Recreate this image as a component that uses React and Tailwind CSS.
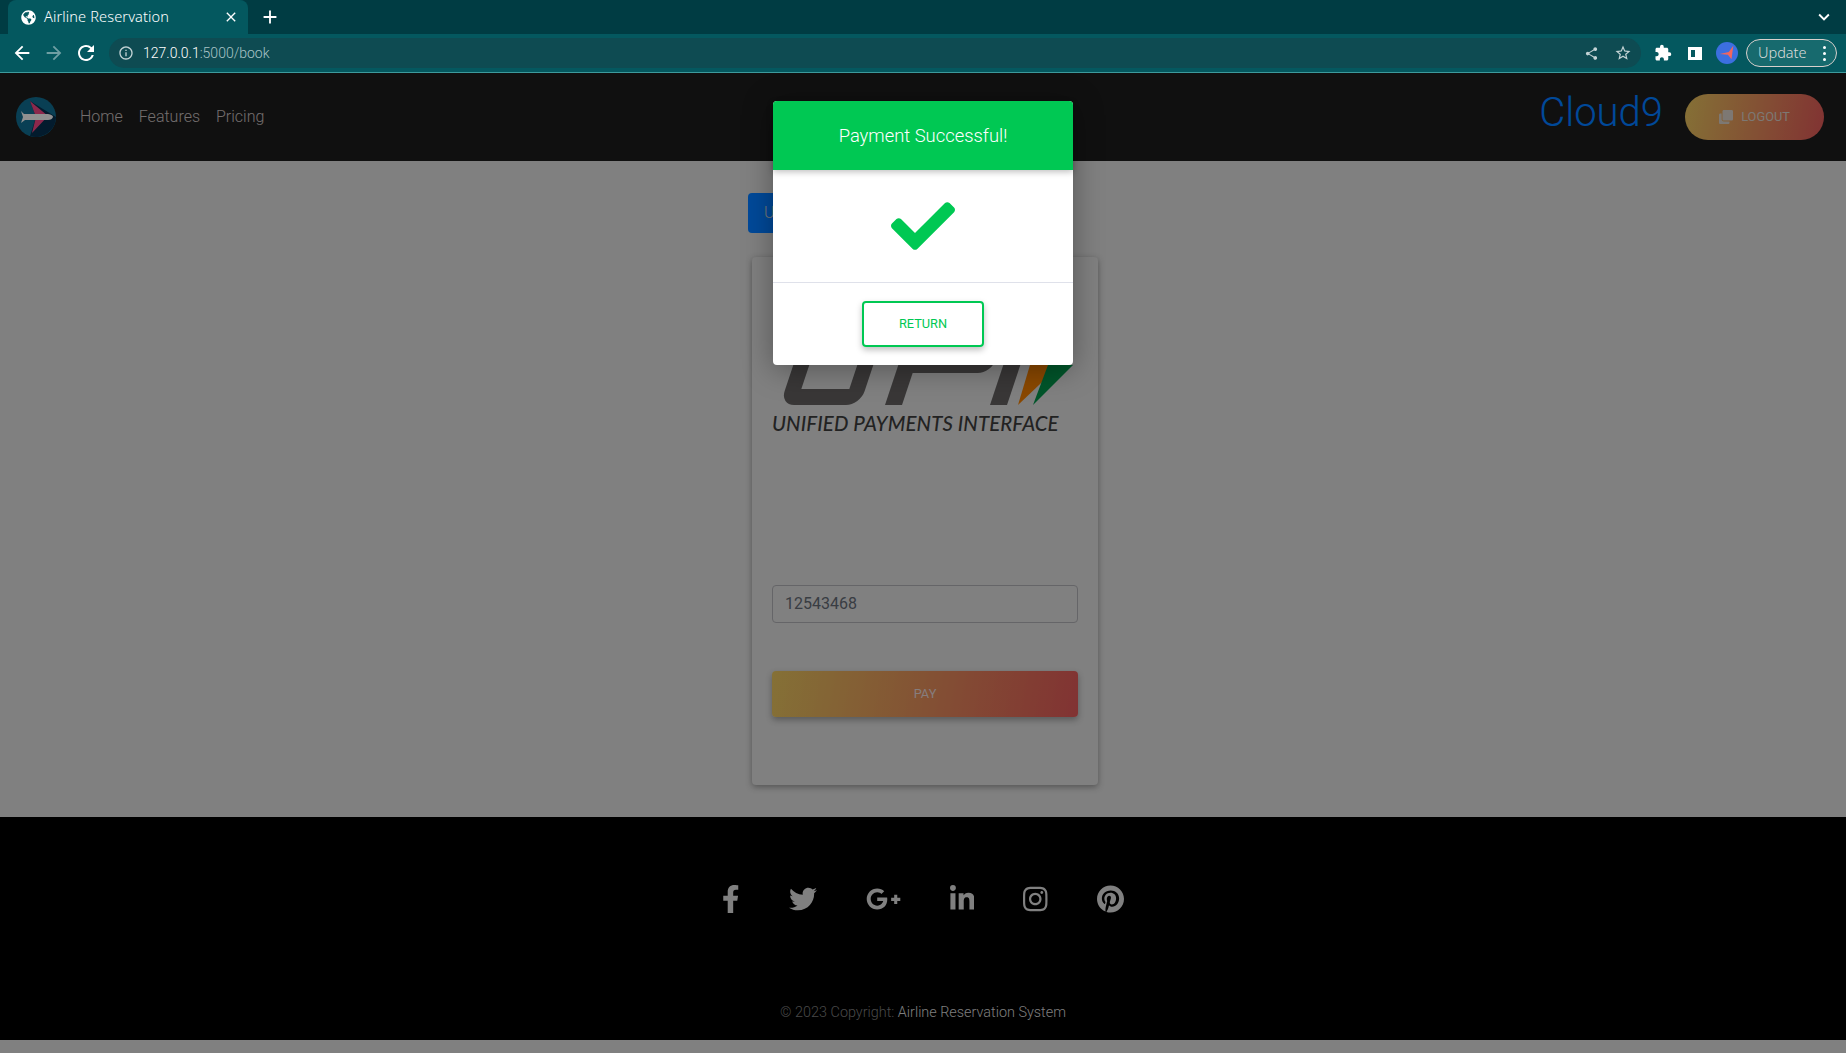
import React from "react";
import {
  MdArrowBack,
  MdArrowForward,
  MdRefresh,
  MdClose,
  MdAdd,
  MdExpandMore,
  MdShare,
  MdStarBorder,
  MdInfoOutline,
  MdExtension,
} from "react-icons/md";
import {
  FaGlobeAmericas,
  FaCheck,
  FaClone,
  FaFacebookF,
  FaTwitter,
  FaGooglePlusG,
  FaLinkedinIn,
  FaInstagram,
  FaPinterest,
} from "react-icons/fa";

/* ───────── Browser bar ───────── */
const BrowserBar = () => (
  <div className="font-['Noto_Sans',sans-serif] text-white">
    <div className="flex h-[34px] items-end bg-[#003c43] pl-2">
      <div className="flex h-[34px] w-[240px] items-center rounded-t-lg bg-[#04585f] pl-[13px] pr-[9px]">
        <FaGlobeAmericas size={15} />
        <span className="ml-[8px] flex-1 text-[14.6px] tracking-[0.1px]">Airline Reservation</span>
        <MdClose size={16} />
      </div>
      <div className="ml-[11px] flex h-[34px] items-center">
        <MdAdd size={22} />
      </div>
      <div className="ml-auto flex h-[34px] items-center pr-[11px]">
        <MdExpandMore size={22} />
      </div>
    </div>
    <div className="flex h-[39px] items-center border-b border-[#3d9a9c] bg-[#04585f] pl-[11px] pr-[9px]">
      <MdArrowBack size={22} />
      <MdArrowForward size={22} className="ml-[10px] text-[#6f9fa3]" />
      <MdRefresh size={24} className="ml-[9px]" />
      <div className="ml-[11px] flex h-[30px] flex-1 items-center rounded-full bg-[#0e4b52] pl-[9px] pr-[9px]">
        <MdInfoOutline size={16} className="text-[#c3d3d5]" />
        <span className="ml-[9px] pt-[1px] font-['Roboto',sans-serif] text-[14px]">
          127.0.0.1<span className="text-[#a9c3c6]">:5000/book</span>
        </span>
        <MdShare size={15} className="ml-auto text-[#c3d3d5]" />
        <MdStarBorder size={18} className="ml-[15px] text-[#c3d3d5]" />
      </div>
      <MdExtension size={18} className="ml-[13px]" />
      <div className="ml-[16px] h-[13px] w-[14px] border-[3px] border-r-[7px] border-white" />
      <div className="ml-[14px] flex h-[22px] w-[22px] items-center justify-center rounded-full bg-[#3c6fe0]">
        <svg viewBox="0 0 20 20" className="h-[18px] w-[18px]">
          <polygon points="2,11 12,9 17,2 15,17 11,12" fill="#f2665e" />
        </svg>
      </div>
      <div className="ml-[8px] flex h-[28px] w-[91px] items-center justify-between rounded-full border border-[#d8d0cc] bg-[#176a6e] pl-[11px] pr-[10px] text-[14.5px] text-[#dcdcdc]">
        Update
        <span className="flex flex-col gap-[3px]">
          <i className="h-[3px] w-[3px] rounded-full bg-white" />
          <i className="h-[3px] w-[3px] rounded-full bg-white" />
          <i className="h-[3px] w-[3px] rounded-full bg-white" />
        </span>
      </div>
    </div>
  </div>
);

/* ───────── Site logo ───────── */
const PlaneLogo = () => (
  <svg viewBox="0 0 40 40" className="h-[40px] w-[40px]">
    <circle cx="20" cy="20" r="20" fill="#0f6a8c" />
    <path d="M14 4 L40 20 A20 20 0 0 1 14 39 L20 20 Z" fill="#052e4b" />
    <polygon points="14,4 32,19 16,36 20,20" fill="#e8447f" />
    <path d="M5 14 L8 17 H32 Q37 18 37 20 Q36 23 32 23 H9 L5 26 L7 20 Z" fill="#f0f0f0" />
  </svg>
);

/* ───────── UPI logo ───────── */
const UpiLogo = () => (
  <svg viewBox="770 350 306 60" className="block h-[60px] w-[306px]">
    <g transform="translate(0,405) skewX(-18.4) translate(0,-405)" fill="none" stroke="#5f5d5d" strokeWidth="16">
      <rect x="788" y="300" width="64" height="97" rx="6" />
      <rect x="893" y="300" width="80" height="65" rx="6" />
      <rect x="885" y="300" width="17" height="105" fill="#5f5d5d" stroke="none" />
      <rect x="990" y="300" width="17" height="105" fill="#5f5d5d" stroke="none" />
    </g>
    <polygon points="1018,405 1030,365 1060,365" fill="#e67800" />
    <polygon points="1033,405 1048,365 1073,365" fill="#008e46" />
  </svg>
);

const Payment = () => (
  <main className="flex h-[656px] justify-center bg-[#d5d5d5] pl-[4px] pt-[32px]">
    <div className="flex w-[354px] flex-col items-start">
      <button className="flex h-[40px] w-[300px] items-center rounded bg-[#007bff] pl-[16px] text-[16px] text-[#c8c8c8]">
        UPI
      </button>
      <div className="ml-[4px] mt-[24px] h-[528px] w-[346px] rounded bg-[#d5d5d5] px-[20px] pt-[93px] shadow-[0_2px_6px_rgba(0,0,0,0.35)]">
        <div className="-ml-[2px]">
          <UpiLogo />
        </div>
        <p className="mt-[1px] whitespace-nowrap font-['Lato',sans-serif] text-[20.4px] font-medium italic leading-[24px] tracking-[0.1px] text-[#3a3a3a]">
          UNIFIED PAYMENTS INTERFACE
        </p>
        <input
          readOnly
          value="12543468"
          className="mt-[150px] block h-[38px] w-[306px] rounded border border-[#a8a8ad] bg-transparent px-[12px] pb-[1px] text-[16px] font-normal text-[#5f6670] outline-none"
        />
        <button className="mt-[48px] block h-[46px] w-[306px] rounded-sm bg-[linear-gradient(100deg,#debc5a,#d85555)] text-[12.8px] font-normal text-[#e0d0d0] shadow-[0_3px_6px_rgba(0,0,0,0.3)]">
          PAY
        </button>
      </div>
    </div>
  </main>
);

const SuccessModal = () => (
  <div className="absolute inset-0 flex justify-center bg-black/40 pt-[28px]">
    <div className="h-[264px] w-[300px] rounded-sm bg-white shadow-[0_4px_30px_rgba(0,0,0,0.35)]">
      <div className="flex h-[69px] items-center justify-center rounded-t-sm bg-[#00c853] text-[18.4px] text-white shadow-[0_2px_6px_rgba(0,0,0,0.25)]">
        Payment Successful!
      </div>
      <div className="flex h-[113px] items-center justify-center border-b border-[#dfe1ea] text-[#00c853]">
        <FaCheck size={64} />
      </div>
      <div className="flex justify-center pt-[18px]">
        <button className="h-[46px] w-[122px] rounded-sm border-2 border-[#00c853] text-[12.8px] font-normal text-[#00c853] shadow-[0_3px_6px_rgba(0,0,0,0.25)]">
          RETURN
        </button>
      </div>
    </div>
  </div>
);

const App = () => (
  <div className="flex h-[1053px] flex-col overflow-hidden bg-[#d5d5d5] font-['Roboto',sans-serif] font-light">
    <BrowserBar />
    <div className="relative flex-1">
      <nav className="flex h-[88px] items-center bg-[#1c1c1c] pl-[16px] pr-[22px]">
        <PlaneLogo />
        <ul className="ml-[16px] flex text-[16px] text-[#c0b8b8]">
          <li className="px-2">Home</li>
          <li className="px-2">Features</li>
          <li className="px-2">Pricing</li>
        </ul>
        <span className="ml-auto pb-[8px] text-[40px] leading-none text-[#007bff]">Cloud9</span>
        <button className="ml-[22px] flex h-[46px] w-[139px] items-center justify-center gap-[8px] rounded-full bg-[linear-gradient(100deg,#debc5a,#d85555)] text-[12.8px] font-normal text-[#d0c8c0]">
          <FaClone size={14} />
          LOGOUT
        </button>
      </nav>
      <Payment />
      <footer className="flex h-[223px] flex-col items-center bg-black pt-[68px]">
        <div className="flex gap-[49px] text-[#d5d5d5]">
          <FaFacebookF size={28} className="w-[17.5px]" />
          <FaTwitter size={28} className="w-[28px]" />
          <FaGooglePlusG size={28} className="w-[35px]" />
          <FaLinkedinIn size={28} className="w-[24.5px]" />
          <FaInstagram size={28} className="w-[24.5px]" />
          <FaPinterest size={28} className="w-[27px]" />
        </div>
        <p className="mt-[89px] text-[14.4px] text-[#7a7a7a]">
          © 2023 Copyright: <span className="text-[#d0d0d0]">Airline Reservation System</span>
        </p>
      </footer>
      <SuccessModal />
    </div>
  </div>
);

export default App;
